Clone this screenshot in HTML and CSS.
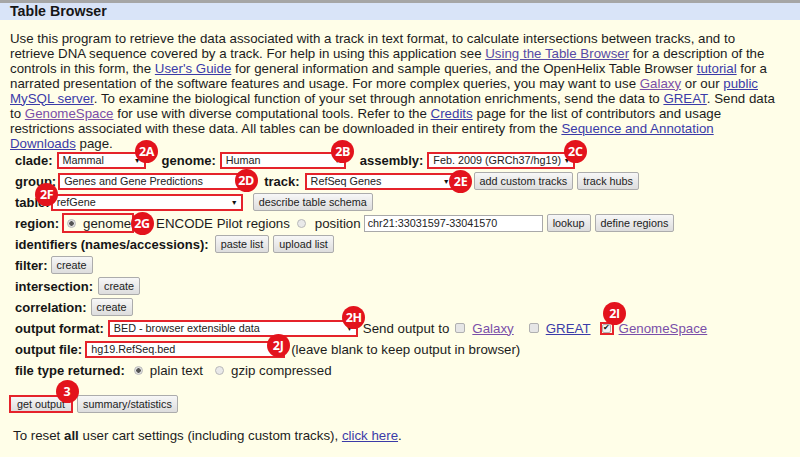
FILE: index.html
```html
<!DOCTYPE html>
<html>
<head>
<meta charset="utf-8">
<link rel="stylesheet" href="styles.css">
</head>
<body>
<div class="topline"></div>
<div class="header">Table Browser</div>
<p class="intro">Use this program to retrieve the data associated with a track in text format, to calculate intersections between tracks, and to<br>retrieve DNA sequence covered by a track. For help in using this application see <a class="mid" href="#">Using the Table Browser</a> for a description of the<br>controls in this form, the <a href="#">User's Guide</a> for general information and sample queries, and the OpenHelix Table Browser <a href="#">tutorial</a> for a<br>narrated presentation of the software features and usage. For more complex queries, you may want to use <a class="vis" href="#">Galaxy</a> or our <a href="#">public<br>MySQL server</a>. To examine the biological function of your set through annotation enrichments, send the data to <a href="#">GREAT</a>. Send data<br>to <a class="vis" href="#">GenomeSpace</a> for use with diverse computational tools. Refer to the <a href="#">Credits</a> page for the list of contributors and usage<br>restrictions associated with these data. All tables can be downloaded in their entirety from the <a href="#">Sequence and Annotation<br>Downloads</a> page.</p>

<div class="form">
  <div class="row">
    <span class="lbl">clade:</span>
    <span class="sel s-clade">Mammal<span class="arrow">▼</span><span class="badge b-2a">2A</span></span>
    <span class="lbl m-genome">genome:</span>
    <span class="sel s-genome">Human<span class="arrow">▼</span><span class="badge b-2b">2B</span></span>
    <span class="lbl m-asm">assembly:</span>
    <span class="sel s-asm">Feb. 2009 (GRCh37/hg19)<span class="arrow">▼</span><span class="badge b-2c">2C</span></span>
  </div>
  <div class="row">
    <span class="lbl">group:</span>
    <span class="sel s-group">Genes and Gene Predictions<span class="arrow">▼</span><span class="badge b-2d">2D</span></span>
    <span class="lbl m-track">track:</span>
    <span class="sel s-track">RefSeq Genes<span class="arrow">▼</span><span class="badge b-2e">2E</span></span>
    <span class="btn m-addct">add custom tracks</span>
    <span class="btn m-4">track hubs</span>
  </div>
  <div class="row">
    <span class="lbl">table:</span>
    <span class="sel s-table">refGene<span class="arrow">▼</span><span class="badge b-2f">2F</span></span>
    <span class="btn m-10">describe table schema</span>
  </div>
  <div class="row">
    <span class="lbl">region:</span>
    <span class="rbox"><span class="radio on"></span><span class="rtext">genome</span><span class="badge b-2g">2G</span></span>
    <span class="m-encode">ENCODE Pilot regions</span>
    <span class="radio m-7"></span>
    <span class="m-9">position</span>
    <span class="input s-pos">chr21:33031597-33041570</span>
    <span class="btn m-4">lookup</span>
    <span class="btn m-4">define regions</span>
  </div>
  <div class="row">
    <span class="lbl">identifiers (names/accessions):</span>
    <span class="btn m-6">paste list</span>
    <span class="btn m-4">upload list</span>
  </div>
  <div class="row">
    <span class="lbl">filter:</span>
    <span class="btn m-3">create</span>
  </div>
  <div class="row">
    <span class="lbl">intersection:</span>
    <span class="btn m-5">create</span>
  </div>
  <div class="row">
    <span class="lbl">correlation:</span>
    <span class="btn m-4">create</span>
  </div>
  <div class="row">
    <span class="lbl">output format:</span>
    <span class="sel s-format">BED - browser extensible data<span class="arrow">▼</span><span class="badge b-2h">2H</span></span>
    <span class="m-5">Send output to</span>
    <span class="check m-6"></span>
    <a class="vis m-7" href="#">Galaxy</a>
    <span class="check m-15"></span>
    <a class="m-7" href="#">GREAT</a>
    <span class="cbox m-9"><span class="check on">✔</span><span class="badge b-2i">2I</span></span>
    <a class="vis m-5" href="#">GenomeSpace</a>
  </div>
  <div class="row">
    <span class="lbl">output file:</span>
    <span class="sel s-file">hg19.RefSeq.bed<span class="badge b-2j">2J</span></span>
    <span class="m-6">(leave blank to keep output in browser)</span>
  </div>
  <div class="row">
    <span class="lbl">file type returned:</span>
    <span class="radio on m-9"></span>
    <span class="m-7">plain text</span>
    <span class="radio m-12"></span>
    <span class="m-7">gzip compressed</span>
  </div>
</div>

<div class="actions">
  <span class="btn btn-red">get output<span class="badge b-3">3</span></span>
  <span class="btn m-4">summary/statistics</span>
</div>
<p class="reset">To reset <b>all</b> user cart settings (including custom tracks), <a href="#">click here</a>.</p>
</body>
</html>
```

FILE: styles.css
```css
* { box-sizing: border-box; }
html, body { margin: 0; padding: 0; }
body {
  width: 800px;
  height: 457px;
  overflow: hidden;
  background: #fffee8;
  font-family: "Liberation Sans", Arial, sans-serif;
  color: #1c1c1c;
}
a { color: #3b3ba8; text-decoration: underline; }
a.vis { color: #7a4fa9; }
a.mid { color: #564aa6; }

.topline { height: 3px; background: #a6a6a6; }
.header {
  height: 16.5px;
  background: #d9e4f8;
  padding-left: 10px;
  font-weight: bold;
  font-size: 14.2px;
  line-height: 16.5px;
  color: #161616;
}
.intro {
  margin: 11px 0 0;
  padding-left: 10px;
  font-size: 13.3px;
  line-height: 15px;
  white-space: nowrap;
}

.form { margin-top: -1px; padding-left: 15px; }
.row {
  display: flex;
  align-items: center;
  height: 21px;
  font-size: 13.3px;
  white-space: nowrap;
}
.lbl { font-weight: bold; font-size: 13px; color: #151515; }

.sel {
  position: relative;
  display: inline-flex;
  align-items: center;
  height: 17px;
  border: 2px solid #e5232b;
  background: #fff;
  font-size: 10.8px;
  line-height: 12px;
  padding-left: 4px;
  color: #222;
}
.sel .arrow {
  position: absolute;
  right: 3px;
  top: 2px;
  font-size: 7px;
  line-height: 9px;
  color: #111;
}
.s-clade { width: 89px; margin-left: 4px; }
.s-genome { width: 126px; margin-left: 4px; }
.s-asm { width: 148px; margin-left: 4px; }
.s-group { width: 191px; margin-left: 2px; }
.s-track { width: 150px; margin-left: 5px; }
.s-table { width: 192px; margin-left: 1px; }
.s-format { width: 250px; margin-left: 4px; }
.s-file { width: 200px; margin-left: 3px; }

.m-genome { margin-left: 16px; }
.m-asm { margin-left: 14px; }
.m-track { margin-left: 15px; }
.m-addct { margin-left: 19px; }
.m-encode { margin-left: 22px; }
.m-3 { margin-left: 3px; }
.m-4 { margin-left: 4px; }
.m-5 { margin-left: 5px; }
.m-6 { margin-left: 6px; }
.m-7 { margin-left: 7px; }
.m-9 { margin-left: 9px; }
.m-10 { margin-left: 10px; }
.m-12 { margin-left: 12px; }
.m-15 { margin-left: 15px; }

.btn {
  position: relative;
  display: inline-flex;
  align-items: center;
  justify-content: center;
  height: 18px;
  padding: 0 5px;
  border: 1px solid #acacac;
  border-radius: 2px;
  background: linear-gradient(#f7f7f7, #dddddd);
  font-size: 10.8px;
  color: #222;
  font-weight: normal;
}
.btn-red {
  width: 64px;
  border: 2px solid #e5232b;
  border-radius: 0;
}

.input {
  display: inline-flex;
  align-items: center;
  height: 17px;
  border: 1px solid #a9a9a9;
  background: #fff;
  font-size: 10.8px;
  padding-left: 3px;
  color: #222;
}
.s-pos { width: 179px; margin-left: 3px; }

.rbox {
  position: relative;
  display: inline-flex;
  align-items: center;
  width: 72px;
  height: 20px;
  margin-left: 3px;
  border: 2px solid #e5232b;
}
.rbox .radio { margin-left: 2.5px; }
.rtext { margin-left: 7.5px; }

.radio {
  display: inline-block;
  width: 9px;
  height: 9px;
  border-radius: 50%;
  border: 1px solid #b9b9b9;
  background: #e9e9e9;
}
.radio.on {
  background: radial-gradient(circle, #555 0 2px, #e2e2e2 2.5px);
}

.check {
  display: inline-flex;
  align-items: center;
  justify-content: center;
  width: 10px;
  height: 10px;
  border: 1px solid #b0b0b0;
  border-radius: 2px;
  background: #e6e6e6;
  font-size: 8px;
  line-height: 8px;
  color: #111;
}
.cbox {
  position: relative;
  display: inline-flex;
  align-items: center;
  justify-content: center;
  width: 14px;
  height: 13px;
  border: 2px solid #e5232b;
}
.cbox .check { width: 9px; height: 9px; background: #f2f2f2; }

.badge {
  position: absolute;
  z-index: 5;
  width: 23px;
  height: 23px;
  border-radius: 50%;
  background: #e3131c;
  color: #fff;
  font-family: "Open Sans", "Liberation Sans", sans-serif;
  font-weight: bold;
  font-size: 12.5px;
  line-height: 23px;
  text-align: center;
  letter-spacing: -0.3px;
}
.b-2a { left: 76.5px; top: -13.5px; }
.b-2b { left: 109.5px; top: -13.5px; }
.b-2c { left: 134.5px; top: -13.5px; }
.b-2d { left: 174.5px; top: -5.5px; }
.b-2e { left: 142.5px; top: -4.5px; }
.b-2f { left: -17.5px; top: -12.5px; }
.b-2g { left: 66.5px; top: -3.5px; }
.b-2h { left: 232.5px; top: -15.5px; }
.b-2i { left: 1.5px; top: -21.5px; }
.b-2j { left: 179.5px; top: -8.5px; }
.b-3 { left: 44.5px; top: -17.5px; }

.actions {
  display: flex;
  align-items: center;
  height: 21px;
  margin-top: 13px;
  padding-left: 9px;
}
.reset {
  margin: 13px 0 0;
  padding-left: 13px;
  font-size: 13.3px;
  line-height: 15px;
  white-space: nowrap;
}
```
